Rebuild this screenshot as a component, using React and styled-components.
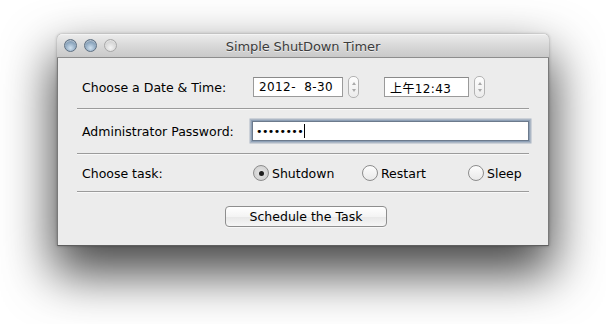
import React from 'react';
import styled, { createGlobalStyle } from 'styled-components';

const GlobalStyle = createGlobalStyle`
    html, body {
        margin: 0;
        background: #fff;
    }
    body {
        font-family: "DejaVu Sans", "Noto Sans CJK SC", sans-serif;
        font-size: 12px;
        color: #000;
    }
`;

const Stage = styled.div`
    width: 606px;
    height: 324px;
    padding: 34px 0 0 57px;
    box-sizing: border-box;
    overflow: hidden;
`;

const Window = styled.div`
    width: 492px;
    box-sizing: border-box;
    border: 1px solid #7a7a7a;
    border-top: none;
    border-bottom-color: #5f5f5f;
    border-radius: 5px 5px 0 0;
    background: #ececec;
    box-shadow: 0 24px 50px 4px rgba(0, 0, 0, 0.72), 0 0 3px rgba(0, 0, 0, 0.3);
`;

const TitleBar = styled.div`
    position: relative;
    height: 22px;
    display: flex;
    align-items: center;
    justify-content: center;
    border-radius: 5px 5px 0 0;
    background: linear-gradient(#ebebeb, #d8d8d8 50%, #c9c9c9);
    border-top: 1px solid #f4f4f4;
    border-bottom: 1px solid #8d8d8d;
    margin: 0 -1px;
`;

const Lights = styled.div`
    position: absolute;
    left: 7px;
    top: 4px;
    display: flex;
    gap: 7px;
`;

const Light = styled.span`
    width: 13px;
    height: 13px;
    border-radius: 50%;
    box-sizing: border-box;
    border: 1px solid ${p => (p.$off ? '#a8a8a8' : '#5f7183')};
    background: ${p =>
        p.$off
            ? 'radial-gradient(circle at 50% 70%, #f4f4f4, #d6d6d6 60%, #c2c2c2)'
            : 'radial-gradient(circle at 50% 72%, #cfe0ef, #8ea8c0 55%, #637a92)'};
    box-shadow: inset 0 1px 1px rgba(255, 255, 255, 0.5);
`;

const Title = styled.span`
    font-size: 13px;
    color: #3c3c3c;
    text-shadow: 0 1px 0 rgba(255, 255, 255, 0.6);
    letter-spacing: -0.1px;
`;

const Content = styled.div`
    padding: 0 19px;
`;

const Row = styled.div`
    display: grid;
    grid-template-columns: 171px 1fr;
    align-items: center;
    padding: ${p => p.$pad};
    padding-left: 5px;
    border-bottom: 1px solid #9b9b9b;
    box-shadow: 0 1px 0 #f8f8f8;
`;

const Label = styled.span`
    font-size: 12.5px;
`;

const Controls = styled.div`
    display: flex;
    align-items: center;
`;

const Field = styled.div`
    width: ${p => p.$w}px;
    height: 20px;
    box-sizing: border-box;
    border: 1px solid #9a9a9a;
    border-top-color: #8a8a8a;
    background: #fff;
    display: flex;
    align-items: center;
    padding-left: 5px;
    font-size: 12px;
    letter-spacing: 0.4px;
    white-space: pre;
`;

const Stepper = styled.div`
    width: 11px;
    height: 22px;
    margin: 0 ${p => p.$after}px 0 5px;
    box-sizing: border-box;
    border: 1px solid #b3b3b3;
    border-radius: 5px;
    background: linear-gradient(#fdfdfd, #ececec);
    display: flex;
    flex-direction: column;
    align-items: center;
    justify-content: space-around;
    padding: 3px 0;
`;

const Arrow = styled.span`
    width: 0;
    height: 0;
    border-left: 2.5px solid transparent;
    border-right: 2.5px solid transparent;
    ${p => (p.$down ? 'border-top: 3px solid #a9a9a9;' : 'border-bottom: 3px solid #a9a9a9;')}
`;

const Password = styled.div`
    margin-left: -1px;
    height: 20px;
    box-sizing: border-box;
    border: 1px solid #6c7a8c;
    background: #fff;
    box-shadow: 0 0 0 1px #8ea0b6, 0 0 0 2.5px rgba(120, 140, 165, 0.55);
    display: flex;
    align-items: center;
    padding-left: 3px;
    font-size: 11px;
    letter-spacing: -0.6px;
`;

const Caret = styled.span`
    width: 1px;
    height: 14px;
    background: #000;
    margin-left: 1px;
`;

const Radios = styled.div`
    display: grid;
    grid-template-columns: 109px 106px auto;
    align-items: center;
`;

const Option = styled.label`
    display: flex;
    align-items: center;
    gap: 3px;
    font-size: 12.5px;
`;

const RadioDot = styled.span`
    width: 16px;
    height: 16px;
    box-sizing: border-box;
    border-radius: 50%;
    border: 1px solid #8c8c8c;
    background: ${p =>
        p.$on
            ? 'radial-gradient(circle, #e6e6e6 0, #d2d2d2 70%, #bdbdbd)'
            : 'linear-gradient(#fdfdfd, #e9e9e9)'};
    display: flex;
    align-items: center;
    justify-content: center;
    &::after {
        content: '';
        width: 5px;
        height: 5px;
        border-radius: 50%;
        background: ${p => (p.$on ? '#1e1e1e' : 'transparent')};
    }
`;

const Footer = styled.div`
    display: flex;
    justify-content: center;
    padding: 14px 0 18px 6px;
`;

const Button = styled.button`
    width: 162px;
    height: 21px;
    border: 1px solid #8e8e8e;
    border-radius: 4px;
    background: linear-gradient(#ffffff, #f4f4f4 50%, #e8e8e8 51%, #f6f6f6);
    font-family: "DejaVu Sans", sans-serif;
    font-size: 12.5px;
    color: #000;
    padding: 0;
    box-shadow: 0 1px 0 rgba(255, 255, 255, 0.6);
`;

const Spin = ({ after }) => (
    <Stepper $after={after}>
        <Arrow />
        <Arrow $down />
    </Stepper>
);

const tasks = [
    { name: 'Shutdown', on: true },
    { name: 'Restart', on: false },
    { name: 'Sleep', on: false },
];

export default function App() {
    return (
        <>
            <GlobalStyle />
            <Stage>
                <Window>
                    <TitleBar>
                        <Lights>
                            <Light />
                            <Light />
                            <Light $off />
                        </Lights>
                        <Title>Simple ShutDown Timer</Title>
                    </TitleBar>
                    <Content>
                        <Row $pad="18px 0 10px">
                            <Label>Choose a Date &amp; Time:</Label>
                            <Controls>
                                <Field $w={90}>{'2012-  8-30'}</Field>
                                <Spin after={25} />
                                <Field $w={85}>上午12:43</Field>
                                <Spin after={0} />
                            </Controls>
                        </Row>
                        <Row $pad="12px 0 12px">
                            <Label>Administrator Password:</Label>
                            <Password>
                                {'••••••••'}
                                <Caret />
                            </Password>
                        </Row>
                        <Row $pad="11px 0 10px">
                            <Label>Choose task:</Label>
                            <Radios>
                                {tasks.map(t => (
                                    <Option key={t.name}>
                                        <RadioDot $on={t.on} />
                                        {t.name}
                                    </Option>
                                ))}
                            </Radios>
                        </Row>
                        <Footer>
                            <Button>Schedule the Task</Button>
                        </Footer>
                    </Content>
                </Window>
            </Stage>
        </>
    );
}
